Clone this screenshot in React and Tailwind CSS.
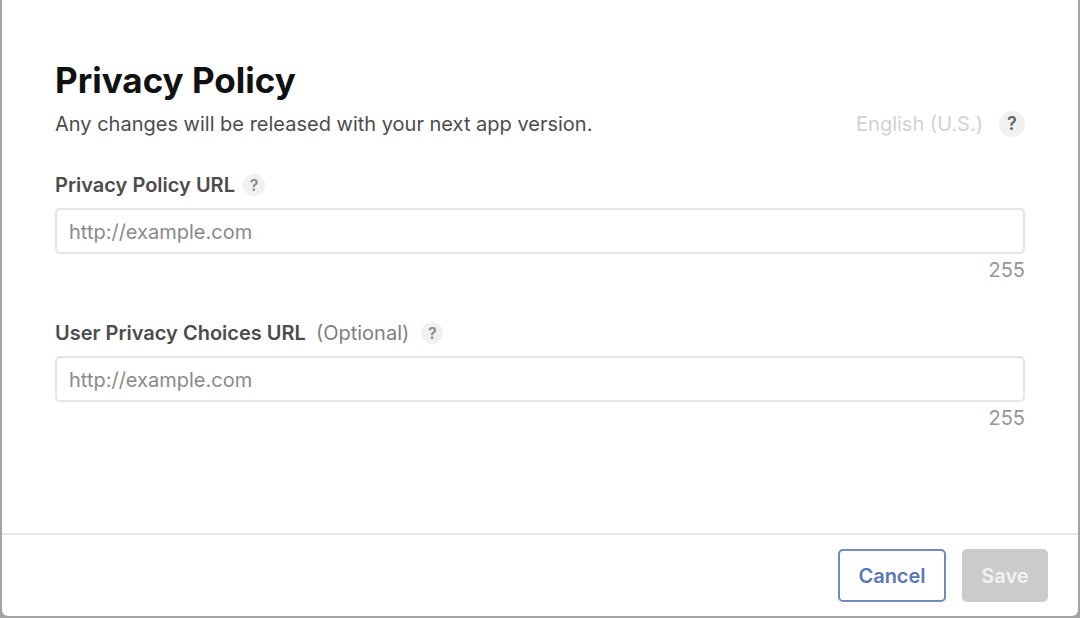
import { useState } from 'react'

const MAX_LENGTH = 255

function HelpButton({ label, large }) {
  return (
    <button
      type="button"
      aria-label={label}
      className={`flex items-center justify-center rounded-full bg-[#f1f1f1] font-semibold ${
        large ? 'size-[26px] text-lg text-[#666]' : 'size-[22px] text-base text-[#8a8a8a]'
      }`}
    >
      ?
    </button>
  )
}

function UrlField({ id, label, optional }) {
  const [value, setValue] = useState('')

  return (
    <div>
      <div className="flex h-[26px] items-center">
        <label htmlFor={id} className="text-xl font-semibold text-[#4c4c4c]">
          {label}
          {optional && <span className="ml-2.5 font-normal text-[#808080]">(Optional)</span>}
        </label>
        <div className={optional ? 'ml-3' : 'ml-2'}>
          <HelpButton label={`About ${label}`} />
        </div>
      </div>
      <input
        id={id}
        type="url"
        maxLength={MAX_LENGTH}
        placeholder="http://example.com"
        value={value}
        onChange={(e) => setValue(e.target.value)}
        className="mt-2.5 block h-[46px] w-full rounded-[5px] border-2 border-[#e5e5e5] bg-white px-3 pt-0.5 text-xl text-[#333] outline-none placeholder:text-[#8a8a8a]"
      />
      <p className="mt-1 text-right text-xl leading-6 text-[#969696]">{MAX_LENGTH - value.length}</p>
    </div>
  )
}

export default function App() {
  return (
    <div className="min-h-screen bg-[#a3a3a3] px-0.5 pb-0.5 font-['Inter',sans-serif]">
      <form className="flex min-h-[calc(100vh-2px)] flex-col rounded-b-md bg-white" onSubmit={(e) => e.preventDefault()}>
        <div className="flex-1 px-[53px] pt-15">
          <h1 className="text-[35px] leading-10 font-bold text-[#111]">Privacy Policy</h1>
          <div className="mt-2 flex h-8 items-center justify-between">
            <p className="text-xl text-[#4c4c4c]">Any changes will be released with your next app version.</p>
            <div className="flex items-center gap-4">
              <span className="text-xl text-[#d2d2d2]">English (U.S.)</span>
              <HelpButton label="About languages" large />
            </div>
          </div>

          <div className="mt-8 flex flex-col gap-[38px]">
            <UrlField id="privacy-url" label="Privacy Policy URL" />
            <UrlField id="choices-url" label="User Privacy Choices URL" optional />
          </div>
        </div>

        {/* Footer */}
        <div className="flex justify-end gap-4 border-t-2 border-[#e8e8e8] px-[30px] py-3.5">
          <button type="button" className="h-[53px] w-[108px] rounded-[5px] border-2 border-[#6f8cbc] text-xl font-semibold text-[#5878b6]">
            Cancel
          </button>
          <button type="submit" disabled className="h-[53px] w-[86px] rounded-[5px] bg-[#cbcbcb] text-xl font-semibold text-[#f2f2f2]">
            Save
          </button>
        </div>
      </form>
    </div>
  )
}
